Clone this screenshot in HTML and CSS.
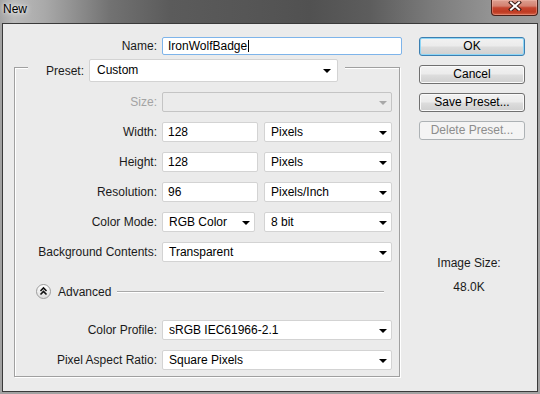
FILE: index.html
```html
<!DOCTYPE html>
<html lang="en">
<head>
    <meta charset="UTF-8">
    <title>New</title>
    <link rel="stylesheet" href="styles.css">
</head>
<body>
    <div class="window">
        <div class="titlebar">
            <span class="title">New</span>
            <div class="close-btn">
                <svg width="14" height="10" viewBox="0 0 14 10">
                    <path d="M3 1.5 L11 8.5 M11 1.5 L3 8.5" stroke="#3a1a14" stroke-width="4" stroke-linecap="square"/>
                    <path d="M3 1.5 L11 8.5 M11 1.5 L3 8.5" stroke="#ffffff" stroke-width="2" stroke-linecap="square"/>
                </svg>
            </div>
        </div>
        <div class="client">
            <div class="form-pane">
                <div class="name-row">
                    <label class="lbl">Name:</label>
                    <div class="field focused">IronWolfBadge<span class="caret"></span></div>
                </div>

                <div class="group">
                    <div class="group-head">
                        <span class="head-lbl">Preset:</span>
                        <div class="field select preset-select">Custom<span class="arrow"></span></div>
                    </div>

                    <div class="rows first-rows">
                        <div class="row">
                            <label class="lbl disabled">Size:</label>
                            <div class="field select disabled"><span class="arrow"></span></div>
                        </div>
                        <div class="row">
                            <label class="lbl">Width:</label>
                            <div class="pair">
                                <div class="field">128</div>
                                <div class="field select">Pixels<span class="arrow"></span></div>
                            </div>
                        </div>
                        <div class="row">
                            <label class="lbl">Height:</label>
                            <div class="pair">
                                <div class="field">128</div>
                                <div class="field select">Pixels<span class="arrow"></span></div>
                            </div>
                        </div>
                        <div class="row">
                            <label class="lbl">Resolution:</label>
                            <div class="pair">
                                <div class="field">96</div>
                                <div class="field select">Pixels/Inch<span class="arrow"></span></div>
                            </div>
                        </div>
                        <div class="row">
                            <label class="lbl">Color Mode:</label>
                            <div class="pair narrow">
                                <div class="field select">RGB Color<span class="arrow"></span></div>
                                <div class="field select">8 bit<span class="arrow"></span></div>
                            </div>
                        </div>
                        <div class="row">
                            <label class="lbl">Background Contents:</label>
                            <div class="field select">Transparent<span class="arrow"></span></div>
                        </div>
                    </div>

                    <div class="advanced">
                        <span class="adv-icon">
                            <svg width="15" height="15" viewBox="0 0 15 15">
                                <path d="M4.5 7 L7.5 4 L10.5 7 M4.5 10.5 L7.5 7.5 L10.5 10.5" fill="none" stroke="#111" stroke-width="1.6"/>
                            </svg>
                        </span>
                        <span class="adv-text">Advanced</span>
                        <span class="adv-line"></span>
                    </div>

                    <div class="rows second-rows">
                        <div class="row">
                            <label class="lbl">Color Profile:</label>
                            <div class="field select">sRGB IEC61966-2.1<span class="arrow"></span></div>
                        </div>
                        <div class="row">
                            <label class="lbl">Pixel Aspect Ratio:</label>
                            <div class="field select">Square Pixels<span class="arrow"></span></div>
                        </div>
                    </div>
                </div>
            </div>

            <div class="side-pane">
                <div class="buttons">
                    <div class="btn default">OK</div>
                    <div class="btn">Cancel</div>
                    <div class="btn">Save Preset...</div>
                    <div class="btn disabled">Delete Preset...</div>
                </div>
                <div class="image-size">
                    <div>Image Size:</div>
                    <div class="size-value">48.0K</div>
                </div>
            </div>
        </div>
    </div>
</body>
</html>
```

FILE: styles.css
```css
* {
    box-sizing: border-box;
}
body {
    margin: 0;
    font-family: "Liberation Sans", Arial, sans-serif;
    font-size: 12px;
    color: #1a1a1a;
    background: #a2a2a2;
}
.window {
    width: 540px;
    height: 394px;
    display: flex;
    flex-direction: column;
    background: #a2a2a2;
}
.titlebar {
    height: 23px;
    flex: none;
    display: flex;
    justify-content: space-between;
    align-items: flex-start;
    padding-left: 3px;
    background: linear-gradient(to right, #a4a4a4 0px, #bababa 14px, #a9a9a9 45px, #727272 110px, #5b5b5b 170px, #555555 260px, #515151 310px, #5d5d5d 370px, #7a7a7a 430px, #939393 490px, #9c9c9c 540px);
}
.title {
    line-height: 19px;
    color: #000;
    text-shadow: 0 0 6px rgba(255, 255, 255, 0.9), 0 0 3px rgba(255, 255, 255, 0.8);
}
.close-btn {
    width: 47px;
    height: 16px;
    margin-right: 2px;
    border: 1px solid #4a2019;
    border-top: none;
    border-radius: 0 0 4px 4px;
    background: linear-gradient(#dca091 0%, #d48170 40%, #c4452f 52%, #bf3a22 80%, #d4654a 100%);
    box-shadow: inset 0 0 0 1px rgba(255, 200, 190, 0.35);
    display: flex;
    justify-content: center;
    align-items: flex-start;
    padding-top: 1px;
}
.client {
    flex: 1;
    margin: 0 2px 2px;
    border: 1px solid #3a3a3a;
    background: #ebebeb;
    display: flex;
}
.form-pane {
    width: 416px;
    flex: none;
}
.name-row {
    display: grid;
    grid-template-columns: 154px 240px;
    column-gap: 5px;
    height: 18px;
    margin-top: 13px;
}
.lbl {
    text-align: right;
    line-height: 20px;
    white-space: nowrap;
}
.name-row .lbl {
    line-height: 18px;
}
.lbl.disabled {
    color: #a3a3a3;
}
.field {
    position: relative;
    height: 20px;
    line-height: 19px;
    padding-left: 5px;
    background: #fff;
    border: 1px solid #d3d3d3;
    border-radius: 2px;
    color: #000;
    white-space: nowrap;
}
.field.focused {
    height: 18px;
    line-height: 16px;
    border-color: #7eb4ea;
}
.caret {
    display: inline-block;
    width: 1px;
    height: 12px;
    background: #000;
    margin-left: 1px;
    vertical-align: -2px;
}
.select {
    padding-left: 6px;
}
.arrow {
    position: absolute;
    right: 4px;
    top: 8px;
    width: 0;
    height: 0;
    border-left: 4px solid transparent;
    border-right: 4px solid transparent;
    border-top: 4px solid #000;
}
.field.disabled {
    background: #ebebeb;
    border-color: #c4c4c4;
}
.field.disabled .arrow {
    border-top-color: #a8a8a8;
}
.group {
    width: 386px;
    margin: 12px 0 0 11px;
    border: 1px solid #a0a0a0;
    box-shadow: 1px 1px 0 #fff, inset 1px 1px 0 #fff;
    padding-bottom: 6px;
}
.group-head {
    display: flex;
    align-items: center;
    width: fit-content;
    margin: -9px 0 0 13px;
    padding: 0 7px 0 18px;
    background: #ebebeb;
}
.head-lbl {
    margin-right: 5px;
}
.preset-select {
    width: 249px;
    height: 23px;
    line-height: 21px;
    padding-left: 7px;
}
.preset-select .arrow {
    top: 9px;
    right: 6px;
}
.rows {
    display: flex;
    flex-direction: column;
    gap: 10px;
}
.first-rows {
    margin-top: 10px;
}
.second-rows {
    margin-top: 21px;
}
.row {
    display: grid;
    grid-template-columns: 142px 230px;
    column-gap: 5px;
    height: 20px;
}
.pair {
    display: grid;
    grid-template-columns: 96px 128px;
    justify-content: space-between;
}
.pair.narrow {
    grid-template-columns: 93px 128px;
}
.advanced {
    display: flex;
    align-items: center;
    height: 15px;
    margin-top: 22px;
    padding: 0 15px 0 21px;
}
.adv-icon {
    width: 15px;
    height: 15px;
    border-radius: 50%;
    border: 1px solid #9c9c9c;
    background: linear-gradient(#ffffff, #dedede);
    display: flex;
    justify-content: center;
    align-items: center;
}
.adv-icon svg {
    margin: -1px;
}
.adv-text {
    margin-left: 7px;
}
.adv-line {
    flex: 1;
    margin-left: 6px;
    border-top: 1px solid #a9a9a9;
    border-bottom: 1px solid #fff;
}
.side-pane {
    width: 106px;
    flex: none;
}
.buttons {
    display: flex;
    flex-direction: column;
    gap: 9px;
    margin-top: 13px;
}
.btn {
    height: 19px;
    line-height: 17px;
    text-align: center;
    color: #000;
    border: 1px solid #707070;
    border-radius: 3px;
    background: linear-gradient(#f2f2f2 0%, #ebebeb 48%, #dddddd 52%, #cfcfcf 100%);
    box-shadow: inset 0 0 0 1px #fafafa;
}
.btn.default {
    border-color: #3c7fb1;
    box-shadow: inset 0 0 0 1px #8ed6f6;
}
.btn.disabled {
    color: #8d8d8d;
    border-color: #adb2b5;
    background: #f4f4f4;
    box-shadow: none;
}
.image-size {
    margin-top: 116px;
    padding-right: 6px;
    text-align: center;
    line-height: 15px;
}
.size-value {
    margin-top: 9px;
}
```
